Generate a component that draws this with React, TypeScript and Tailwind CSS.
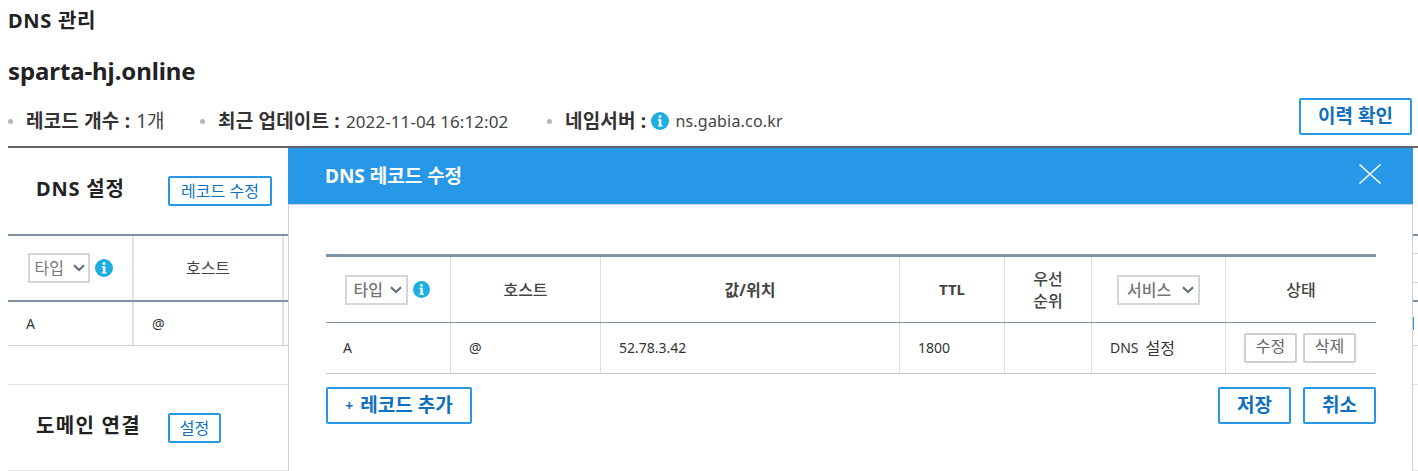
const F = "font-['Noto_Sans','Noto_Sans_CJK_KR',sans-serif]";

function Info({ size }: { size: number }) {
  return (
    <svg width={size} height={size} viewBox="0 0 18 18" className="shrink-0">
      <circle cx="9" cy="9" r="9" fill="#1eaee0" />
      <rect x="7.6" y="3.2" width="2.8" height="2.8" rx="1.2" fill="#fff" />
      <path d="M6.8 7.2h3.6v6h1.2v1.4H6.8v-1.4h1.1V8.6H6.8z" fill="#fff" />
    </svg>
  );
}

function Chevron() {
  return (
    <svg width="12" height="8" viewBox="0 0 12 8" className="shrink-0">
      <path d="M1 1.2 6 6l5-4.8" fill="none" stroke="#5f6b78" strokeWidth="2" />
    </svg>
  );
}

function Select({ label, w, pl, gap }: { label: string; w: string; pl: string; gap: string }) {
  return (
    <span className={`inline-flex h-[30px] items-center border-2 border-[#d6d6d6] text-base text-[#777] ${w} ${pl} ${gap}`}>
      {label}
      <Chevron />
    </span>
  );
}

function OutlineBtn({ children, className }: { children: React.ReactNode; className: string }) {
  return (
    <button className={`flex items-center justify-center rounded-[2px] border-2 border-[#2797e8] bg-white text-[19px] font-bold text-[#0f70c0] ${className}`}>
      {children}
    </button>
  );
}

function SmallBtn({ children, className }: { children: React.ReactNode; className: string }) {
  return (
    <button className={`flex h-[30px] items-center justify-center rounded-[2px] border-2 border-[#2797e8] bg-white text-base text-[#0f70c0] ${className}`}>
      {children}
    </button>
  );
}

function GreyBtn({ children }: { children: React.ReactNode }) {
  return (
    <button className="flex h-[30px] w-[53px] items-center justify-center rounded-[2px] border-2 border-[#cfcfcf] bg-white pb-1 text-base text-[#666]">
      {children}
    </button>
  );
}

function Meta({ label, value, icon, className, valueClass }: { label: string; value: string; icon?: boolean; className: string; valueClass: string }) {
  return (
    <div className={`flex items-center ${className}`}>
      <span className="mr-[13px] size-[5px] rounded-full bg-[#b5b5b5]" />
      <span className="text-[19px] font-bold leading-none tracking-[0.2px] text-[#333]">{label}</span>
      {icon && <span className="ml-[5px] mr-[6px]"><Info size={18} /></span>}
      <span className={`leading-none text-[#444] ${valueClass} ${icon ? "" : "ml-[6px]"}`}>{value}</span>
    </div>
  );
}

export default function App() {
  return (
    <div className={`${F} relative h-[471px] w-[1418px] overflow-hidden bg-white pl-2 text-[#222]`}>
      <div className="flex h-[42px] items-center text-[20px] font-bold leading-none tracking-[0.7px]">DNS 관리</div>
      <div className="mt-[9px] flex h-[40px] items-center text-2xl font-bold leading-none tracking-[-0.1px]">sparta-hj.online</div>
      <div className="mt-[7px] flex h-[37px] items-start justify-between pr-[6px]">
        <div className="flex h-[37px] pt-[9px]">
          <Meta label="레코드 개수 :" value="1개" valueClass="text-[19px]" className="w-[192px]" />
          <Meta label="최근 업데이트 :" value="2022-11-04 16:12:02" valueClass="text-[17px] tracking-[0.1px]" className="w-[347px]" />
          <Meta label="네임서버 :" value="ns.gabia.co.kr" valueClass="text-base tracking-[0.2px]" icon className="" />
        </div>
        <OutlineBtn className="h-[37px] w-[113px]">이력 확인</OutlineBtn>
      </div>
      <div className="mt-[11px] border-t-2 border-[#666]">
        <div className="flex h-[86px] items-center pl-[28px]">
          <span className="w-[132px] pb-[4px] text-[20px] font-bold tracking-[0.8px]">DNS 설정</span>
          <SmallBtn className="w-[104px]">레코드 수정</SmallBtn>
        </div>
        <div className="flex h-[68px] border-t-2 border-b-2 border-[#7f92a3]">
          <div className="flex w-[126px] items-center justify-center gap-[5px] border-r-2 border-[#e0e0e0]">
            <Select label="타입" w="w-[62px]" pl="pl-[5px]" gap="gap-[9px]" />
            <Info size={18} />
          </div>
          <div className="flex w-[150px] items-center justify-center border-r-2 border-[#e0e0e0] text-base text-[#444]">호스트</div>
          <div className="ml-auto h-[30px] w-[5px] self-center border-y border-[#d4d4d4]" />
        </div>
        <div className="flex h-[44px] border-b border-[#d0d0d0] text-sm text-[#333]">
          <div className="flex w-[126px] items-center border-r-2 border-[#e0e0e0] pl-[18px]">A</div>
          <div className="flex w-[150px] items-center border-r-2 border-[#e0e0e0] pl-[18px]">@</div>
          <div className="ml-auto mt-[15px] h-[13px] w-[5px] border-l border-[#2797e8]" />
        </div>
        <div className="mt-[38px] flex h-[87px] items-center border-y border-[#e5e5e5] pl-[28px]">
          <span className="w-[132px] pb-[4px] text-[20px] font-bold tracking-[1.3px]">도메인 연결</span>
          <SmallBtn className="w-[53px]">설정</SmallBtn>
        </div>
      </div>

      {/* modal */}
      <div className="absolute left-[288px] top-[148px] h-[323px] w-[1125px] border-x border-[#d0d0d0] bg-white">
        <div className="-mx-[1px] flex h-[56px] items-center justify-between bg-[#2797e8] pl-[37px] pr-[32px] text-[19px] font-bold text-white">
          DNS 레코드 수정
          <svg width="22" height="20" viewBox="0 0 22 20" fill="none" stroke="#fff" strokeWidth="1.5" className="mb-[4px]">
            <path d="M.5.5l21 19M21.5.5l-21 19" />
          </svg>
        </div>
        <div className="h-[1px] bg-[#d4d4d4]" />
        <div className="pl-[37px] pr-[36px] pt-[49px]">
          <div className="flex h-[69px] border-t-[3px] border-b border-t-[#7f92a3] border-b-[#7f92a3] text-base font-medium text-[#444]">
            <div className="flex w-[125px] items-center justify-center gap-[5px] border-r border-[#dedede] pr-[2px]">
              <Select label="타입" w="w-[63px]" pl="pl-[7px]" gap="gap-[7px]" />
              <Info size={17} />
            </div>
            <div className="flex w-[150px] items-center justify-center border-r border-[#dedede]">호스트</div>
            <div className="flex w-[299px] items-center justify-center border-r border-[#dedede] font-bold">값/위치</div>
            <div className="flex w-[105px] items-center justify-center border-r border-[#dedede] text-[15px] font-bold">TTL</div>
            <div className="flex w-[87px] items-center justify-center border-r border-[#dedede] text-center leading-[22px]">우선<br />순위</div>
            <div className="flex w-[134px] items-center justify-center border-r border-[#dedede]">
              <Select label="서비스" w="w-[83px]" pl="pl-[8px]" gap="gap-[11px]" />
            </div>
            <div className="flex flex-1 items-center justify-center">상태</div>
          </div>
          <div className="flex h-[51px] border-b border-[#c8c8c8] text-sm text-[#333]">
            <div className="flex w-[125px] items-center border-r border-[#dedede] pl-[17px]">A</div>
            <div className="flex w-[150px] items-center border-r border-[#dedede] pl-[18px]">@</div>
            <div className="flex w-[299px] items-center border-r border-[#dedede] pl-[18px]">52.78.3.42</div>
            <div className="flex w-[105px] items-center border-r border-[#dedede] pl-[18px]">1800</div>
            <div className="w-[87px] border-r border-[#dedede]" />
            <div className="flex w-[134px] items-center gap-[7px] border-r border-[#dedede] pl-[18px]">DNS <span className="text-base">설정</span></div>
            <div className="flex flex-1 items-center justify-center gap-[6px] pr-[2px]">
              <GreyBtn>수정</GreyBtn>
              <GreyBtn>삭제</GreyBtn>
            </div>
          </div>
          <div className="mt-[13px] flex justify-between">
            <OutlineBtn className="h-[37px] w-[146px]"><span className="mr-[7px] text-sm">+</span>레코드 추가</OutlineBtn>
            <div className="flex gap-[12px]">
              <OutlineBtn className="h-[37px] w-[73px]">저장</OutlineBtn>
              <OutlineBtn className="h-[37px] w-[73px]">취소</OutlineBtn>
            </div>
          </div>
        </div>
      </div>
    </div>
  );
}
